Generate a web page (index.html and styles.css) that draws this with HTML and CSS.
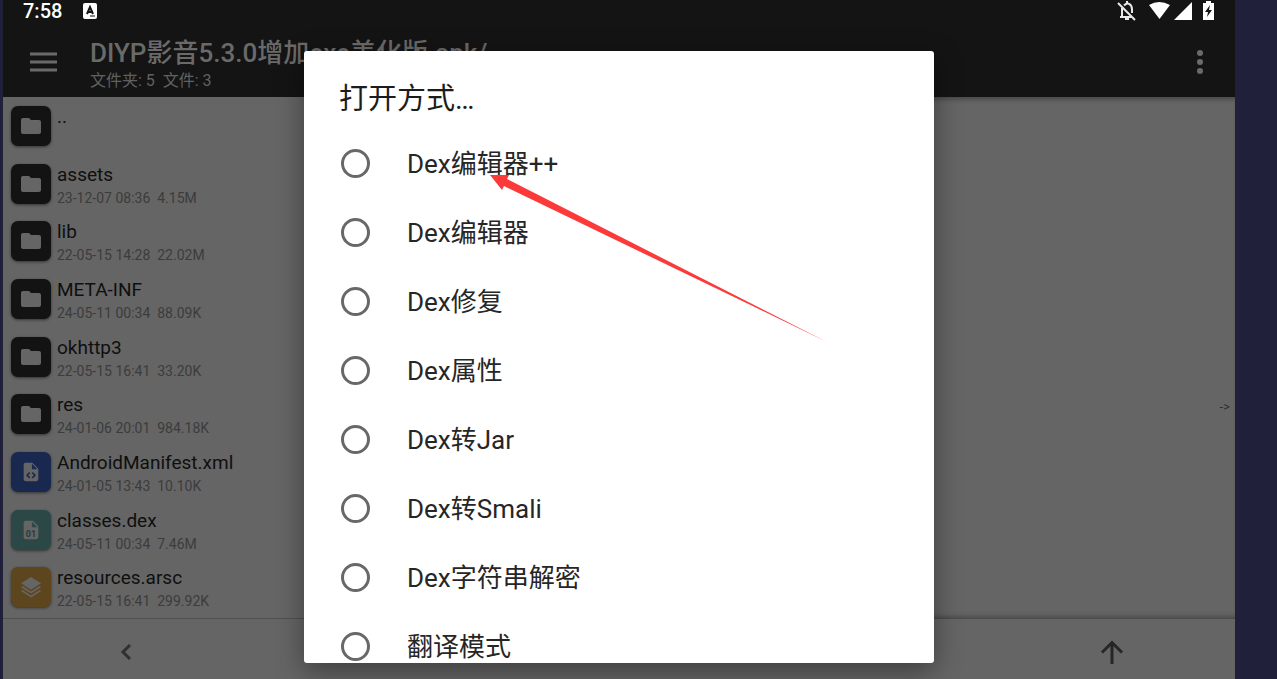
FILE: index.html
```html
<!DOCTYPE html>
<html lang="zh-CN">
  <head>
    <meta charset="UTF-8" />
    <meta name="viewport" content="width=device-width, initial-scale=1.0" />
    <title>DIYP影音5.3.0增加exe美化版.apk/</title>
    <link rel="stylesheet" href="styles.css">
  </head>
  <body>
    <!-- 图标 -->
    <svg class="icon-defs" aria-hidden="true">
      <symbol id="icon-folder" viewBox="0 0 24 24">
        <path d="M10 4H4c-1.100 0-2 .9-2 2v12c0 1.100.9 2 2 2h16c1.100 0 2-.9 2-2V8c0-1.100-.9-2-2-2h-8z" />
      </symbol>
      <symbol id="icon-code" viewBox="0 0 24 24">
        <path fill-rule="evenodd" d="M4 2h9.500L20 8.500V20q0 2-2 2H6q-2 0-2-2V4q0-2 2-2zM13 3v6h6zM10 12l-3.500 3.500L10 19l1.200-1.200-2.300-2.300 2.300-2.300zM14 12l-1.200 1.200 2.300 2.300-2.300 2.300L14 19l3.500-3.500z" />
      </symbol>
      <symbol id="icon-file" viewBox="0 0 24 24">
        <path fill-rule="evenodd" d="M6 2h8l6 6v12q0 2-2 2H6q-2 0-2-2V4q0-2 2-2zM13 3v6h6z" />
      </symbol>
      <symbol id="icon-layers" viewBox="0 0 24 24">
        <path d="M12 1L1 8l11 7 11-7zM2.800 11L1 12.200l11 7 11-7L21.200 11 12 17zM2.800 15.200L1 16.400l11 7 11-7-1.800-1.200L12 21.200z" />
      </symbol>
    </svg>

    <div class="app">
      <header class="header">
        <div class="status">
          <span class="status__time">7:58</span>
          <svg class="status__input" viewBox="0 0 14 16" aria-hidden="true">
            <rect width="14" height="16" rx="2" fill="#fff" />
            <path d="M4 11L7 4l3 7M5 9h4" fill="none" stroke="#141414" stroke-width="2" />
            <path d="M7 13h5" stroke="#141414" />
          </svg>
          <svg class="status__system" viewBox="0 0 100 20" aria-hidden="true">
            <g fill="none" stroke="#e8e8e8" stroke-width="2">
              <path d="M2 2l17 17M6 7v8M4 16h12M8 4.500c4-4 8-1 8 4V12" />
              <path d="M11 0v2M9 18h4" />
            </g>
            <path d="M33 4q10-6 21 0L43.500 18z" fill="#fff" />
            <path d="M58 19L76 1v18z" fill="#fff" />
            <path d="M87 2h3V0h5v2h3v17H87z" fill="#fff" />
            <path d="M94 4l-5 7h3l-1 5 5-7h-3z" fill="#141414" />
          </svg>
        </div>
        <div class="toolbar">
          <button class="toolbar__btn" type="button" aria-label="菜单">
            <svg width="28" height="20" viewBox="0 0 28 20">
              <path d="M0 2h27M0 10h27M0 18h27" stroke="#6a6a6a" stroke-width="3" />
            </svg>
          </button>
          <div class="toolbar__text">
            <h1 class="toolbar__title">DIYP影音5.3.0增加exe美化版.apk/</h1>
            <p class="toolbar__sub">文件夹: 5&nbsp; 文件: 3</p>
          </div>
          <button class="toolbar__btn" type="button" aria-label="更多">
            <svg width="8" height="24" viewBox="0 0 8 24" fill="#6a6a6a">
              <circle cx="4" cy="3" r="3" />
              <circle cx="4" cy="12" r="3" />
              <circle cx="4" cy="21" r="3" />
            </svg>
          </button>
        </div>
      </header>

      <main class="panes">
        <ul class="files">
          <li class="file">
            <span class="file__icon"><svg><use href="#icon-folder" /></svg></span>
            <div class="file__text"><a class="file__name" href="#">..</a><span class="file__meta">&nbsp;</span></div>
          </li>
          <li class="file">
            <span class="file__icon"><svg><use href="#icon-folder" /></svg></span>
            <div class="file__text"><a class="file__name" href="#">assets</a><span class="file__meta">23-12-07 08:36&nbsp; 4.15M</span></div>
          </li>
          <li class="file">
            <span class="file__icon"><svg><use href="#icon-folder" /></svg></span>
            <div class="file__text"><a class="file__name" href="#">lib</a><span class="file__meta">22-05-15 14:28&nbsp; 22.02M</span></div>
          </li>
          <li class="file">
            <span class="file__icon"><svg><use href="#icon-folder" /></svg></span>
            <div class="file__text"><a class="file__name" href="#">META-INF</a><span class="file__meta">24-05-11 00:34&nbsp; 88.09K</span></div>
          </li>
          <li class="file">
            <span class="file__icon"><svg><use href="#icon-folder" /></svg></span>
            <div class="file__text"><a class="file__name" href="#">okhttp3</a><span class="file__meta">22-05-15 16:41&nbsp; 33.20K</span></div>
          </li>
          <li class="file">
            <span class="file__icon"><svg><use href="#icon-folder" /></svg></span>
            <div class="file__text"><a class="file__name" href="#">res</a><span class="file__meta">24-01-06 20:01&nbsp; 984.18K</span></div>
          </li>
          <li class="file">
            <span class="file__icon file__icon--xml"><svg><use href="#icon-code" /></svg></span>
            <div class="file__text"><a class="file__name" href="#">AndroidManifest.xml</a><span class="file__meta">24-01-05 13:43&nbsp; 10.10K</span></div>
          </li>
          <li class="file">
            <span class="file__icon file__icon--dex"><svg><use href="#icon-file" /></svg><span class="file__digits">01</span></span>
            <div class="file__text"><a class="file__name" href="#">classes.dex</a><span class="file__meta">24-05-11 00:34&nbsp; 7.46M</span></div>
          </li>
          <li class="file">
            <span class="file__icon file__icon--arsc"><svg><use href="#icon-layers" /></svg></span>
            <div class="file__text"><a class="file__name" href="#">resources.arsc</a><span class="file__meta">22-05-15 16:41&nbsp; 299.92K</span></div>
          </li>
        </ul>
        <section class="side">-&gt;</section>
      </main>

      <nav class="bottom">
        <button class="bottom__btn" type="button" aria-label="后退">
          <svg width="12" height="18" viewBox="0 0 12 18">
            <path d="M10 2L3 9l7 7" fill="none" stroke="#303030" stroke-width="3" />
          </svg>
        </button>
        <button class="bottom__btn" type="button" aria-label="上级目录">
          <svg width="24" height="24" viewBox="0 0 24 24">
            <path d="M12 24V2M2 12.500L12 2.500l10 10" fill="none" stroke="#262626" stroke-width="3" />
          </svg>
        </button>
      </nav>

      <!-- 打开方式弹窗 -->
      <div class="overlay">
        <form class="dialog" role="dialog" aria-labelledby="dialog-title">
          <h2 id="dialog-title" class="dialog__title">打开方式…</h2>
          <div class="dialog__list">
            <label class="option"><input class="option__radio" type="radio" name="open" /><span class="option__text">Dex编辑器++</span></label>
            <label class="option"><input class="option__radio" type="radio" name="open" /><span class="option__text">Dex编辑器</span></label>
            <label class="option"><input class="option__radio" type="radio" name="open" /><span class="option__text">Dex修复</span></label>
            <label class="option"><input class="option__radio" type="radio" name="open" /><span class="option__text">Dex属性</span></label>
            <label class="option"><input class="option__radio" type="radio" name="open" /><span class="option__text">Dex转Jar</span></label>
            <label class="option"><input class="option__radio" type="radio" name="open" /><span class="option__text">Dex转Smali</span></label>
            <label class="option"><input class="option__radio" type="radio" name="open" /><span class="option__text">Dex字符串解密</span></label>
            <label class="option"><input class="option__radio" type="radio" name="open" /><span class="option__text">翻译模式</span></label>
          </div>
          <svg class="arrow" viewBox="0 0 337 167" aria-hidden="true">
            <path d="M0 0h19l-2 4L337 167 14 11l-2 4z" fill="#fc3a3a" />
          </svg>
        </form>
      </div>
    </div>
  </body>
</html>
```
FILE: styles.css
```css
* {
  box-sizing: border-box;
}

body {
  margin: 0;
  background-color: #21203b;
  font-family: Roboto, "Noto Sans CJK SC", sans-serif;
}

h1,
h2,
p,
ul {
  margin: 0;
  padding: 0;
}

button {
  padding: 0;
  border: none;
  background: none;
  cursor: pointer;
}

svg {
  display: block;
}

.icon-defs {
  position: absolute;
  width: 0;
  height: 0;
}

.app {
  position: relative;
  display: flex;
  flex-direction: column;
  height: 100vh;
  margin: 0 42px 0 3px;
  overflow: hidden;
  background-color: #656565;
}

/* 顶部 */
.header {
  background-color: #141414;
}

.status {
  display: flex;
  align-items: center;
  height: 22px;
  padding: 0 19px 0 20px;
}

.status__time {
  color: #ffffff;
  font-size: 20px;
  font-weight: 500;
  line-height: 22px;
}

.status__input {
  width: 14px;
  height: 16px;
  margin-left: 21px;
}

.status__system {
  width: 100px;
  height: 20px;
  margin-left: auto;
}

.toolbar {
  display: flex;
  align-items: center;
  height: 75px;
  padding: 0 31px 0 27px;
}

.toolbar__btn {
  padding-top: 5px;
}

.toolbar__text {
  flex: 1;
  margin-left: 32px;
  padding-top: 10px;
  color: #6a6a6a;
}

.toolbar__title {
  font-size: 26px;
  font-weight: 500;
  line-height: 32px;
}

.toolbar__sub {
  font-size: 16px;
  line-height: 24px;
  color: #606060;
}

/* 文件列表 */
.panes {
  display: flex;
  flex: 1;
}

.files {
  display: flex;
  flex: 1;
  flex-direction: column;
  padding-bottom: 2px;
  list-style: none;
  border-bottom: 1px solid #505050;
}

.file {
  display: flex;
  flex: 1;
  align-items: center;
  gap: 6px;
  padding-left: 8px;
}

.file__icon {
  position: relative;
  display: flex;
  align-items: center;
  justify-content: center;
  width: 40px;
  height: 40px;
  border-radius: 7px;
  background-color: #131313;
  box-shadow: 0 1px 3px rgba(0, 0, 0, 0.5);
  fill: #656565;
}

.file__icon svg {
  width: 24px;
  height: 24px;
}

.file__icon--xml {
  background-color: #19284f;
}

.file__icon--dex {
  background-color: #2b4847;
}

.file__icon--arsc {
  background-color: #5d451d;
}

.file__icon--arsc svg,
.file__icon--xml svg,
.file__icon--dex svg {
  width: 22px;
  height: 22px;
}

.file__digits {
  position: absolute;
  top: 18px;
  left: 0;
  width: 100%;
  color: #223c3b;
  font-size: 9px;
  font-weight: 700;
  line-height: 12px;
  text-align: center;
}

.file__text {
  display: flex;
  flex-direction: column;
  padding-top: 4px;
}

.file__name {
  color: #0f0f0f;
  font-size: 19px;
  line-height: 24px;
  text-decoration: none;
}

.file__meta {
  color: #3c3c3c;
  font-size: 14px;
  line-height: 22px;
}

.side {
  display: flex;
  flex: 1;
  align-items: center;
  justify-content: flex-end;
  padding: 96px 5px 0 0;
  color: #303030;
  font-size: 13px;
  box-shadow: inset 0 6px 5px -4px #444444, inset 0 -6px 5px -4px #444444;
}

/* 底部 */
.bottom {
  display: flex;
  justify-content: space-between;
  height: 60px;
}

.bottom__btn {
  display: flex;
  align-items: center;
  justify-content: center;
  width: 20%;
  padding-top: 6px;
}

/* 弹窗 */
.overlay {
  position: absolute;
  inset: 0;
  display: flex;
  justify-content: center;
  padding: 51px 16px 16px;
}

.dialog {
  position: relative;
  display: flex;
  flex-direction: column;
  width: 100%;
  max-width: 630px;
  border-radius: 3px;
  background-color: #ffffff;
  box-shadow: 0 8px 28px rgba(0, 0, 0, 0.4);
}

.dialog__title {
  padding: 26px 35px 8px;
  color: #1c1c1c;
  font-size: 29px;
  font-weight: 400;
  line-height: 44px;
}

.dialog__list {
  flex: 1;
  min-height: 0;
  overflow: hidden;
}

.option {
  display: flex;
  align-items: center;
  gap: 37px;
  height: 69px;
  padding-left: 37px;
  color: #262626;
  font-size: 26px;
  cursor: pointer;
}

.option__text {
  padding-bottom: 4px;
}

.option__radio {
  width: 29px;
  height: 29px;
  margin: 0;
  border: 3px solid #686868;
  border-radius: 50%;
  appearance: none;
}

.option__radio:checked {
  border-width: 9px;
}

/* 红色箭头 */
.arrow {
  position: absolute;
  top: 124px;
  left: 186px;
  width: 337px;
  height: 167px;
  pointer-events: none;
}
```
